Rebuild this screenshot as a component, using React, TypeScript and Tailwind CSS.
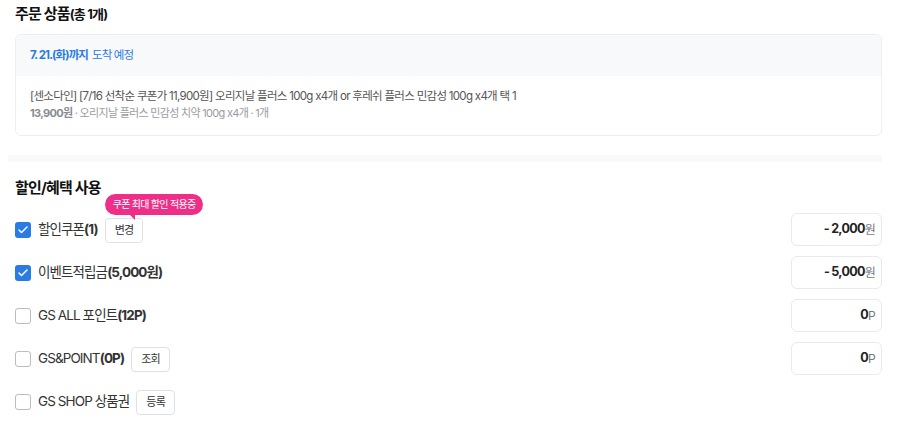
import { Check } from 'lucide-react'

const font = { fontFamily: 'Inter, "Noto Sans CJK KR", sans-serif' }

type Row = {
  label: string
  bold?: string
  checked: boolean
  button?: string
  tip?: string
  amount?: { value: string; unit: string }
}

const rows: Row[] = [
  { label: '할인쿠폰', bold: '(1)', checked: true, button: '변경', tip: '쿠폰 최대 할인 적용중', amount: { value: '- 2,000', unit: '원' } },
  { label: '이벤트적립금', bold: '(5,000원)', checked: true, amount: { value: '- 5,000', unit: '원' } },
  { label: 'GS ALL 포인트', bold: '(12P)', checked: false, amount: { value: '0', unit: 'P' } },
  { label: 'GS&POINT', bold: '(0P)', checked: false, button: '조회', amount: { value: '0', unit: 'P' } },
  { label: 'GS SHOP 상품권', checked: false, button: '등록' },
]

function Checkbox({ checked }: { checked: boolean }) {
  if (checked) {
    return (
      <span className="flex h-4 w-4 shrink-0 items-center justify-center rounded-[3px] bg-[#2b7be4]">
        <Check size={12} strokeWidth={3} className="text-white" />
      </span>
    )
  }
  return <span className="h-4 w-4 shrink-0 rounded-[3px] border border-[#b9bcc3] bg-white" />
}

function BenefitRow({ row }: { row: Row }) {
  return (
    <div className="flex h-[33px] items-center justify-between">
      <div className="flex items-center">
        <Checkbox checked={row.checked} />
        <span className="ml-[7px] text-[13.5px] tracking-[-0.9px] text-[#333]">
          {row.label}
          {row.bold && <b className="font-bold">{row.bold}</b>}
        </span>
        {row.button && (
          <div className="relative ml-[7px]">
            {row.tip && (
              <div className="absolute bottom-[28px] left-0 whitespace-nowrap rounded-full bg-[#ee2f88] px-[8px] py-[3px] text-[10px] leading-[15px] tracking-[-0.7px] text-white">
                {row.tip}
                <span className="absolute -bottom-[5px] left-[24px] h-0 w-0 border-l-[6px] border-t-[6px] border-l-transparent border-t-[#ee2f88]" />
              </div>
            )}
            <button className="h-[25px] rounded-[4px] border border-[#dfe1e5] bg-white px-[9px] text-[11px] tracking-[-0.7px] text-[#333]">
              {row.button}
            </button>
          </div>
        )}
      </div>
      {row.amount && (
        <div className="flex h-[33px] w-[91px] items-center justify-end rounded-[6px] border border-[#e8eaee] pr-[6px] tracking-[-0.7px]">
          <span className="text-[12.5px] font-bold text-[#222]">{row.amount.value}</span>
          <span className="text-[12px] text-[#777]">{row.amount.unit}</span>
        </div>
      )}
    </div>
  )
}

export default function App() {
  return (
    <div className="min-h-[427px] w-[900px] bg-white pl-[15px] pr-[18px] pt-[4px]" style={font}>
      <h2 className="text-[15px] font-bold leading-[20px] tracking-[-0.8px] text-[#111]">
        주문 상품<span className="text-[13px]">(총 1개)</span>
      </h2>

      <div className="mt-[10px] overflow-hidden rounded-[6px] border border-[#eceef1]">
        <div className="flex h-[41px] items-center bg-[#f8f9fb] px-[14px] text-[11.5px] tracking-[-0.9px] text-[#2b7be4]">
          <b className="font-bold">7. 21.(화)까지</b>
          <span className="ml-[4px]">도착 예정</span>
        </div>
        <div className="px-[14px] pb-[14px] pt-[12px] tracking-[-0.7px]">
          <p className="text-[11.5px] leading-[17px] text-[#555]">
            [센소다인] [7/16 선착순 쿠폰가 11,900원] 오리지날 플러스 100g x4개 or 후레쉬 플러스 민감성 100g x4개 택 1
          </p>
          <p className="text-[11px] leading-[16px] text-[#9a9ca3]">
            <b className="font-bold text-[#8a8c92]">13,900원</b> · 오리지날 플러스 민감성 치약 100g x4개 · 1개
          </p>
        </div>
      </div>

      <div className="-ml-[7px] mt-[19px] h-[7px] bg-[#f8f9fb]" />

      <h2 className="mt-[16px] text-[15px] font-bold leading-[20px] tracking-[-0.8px] text-[#111]">할인/혜택 사용</h2>

      <div className="mt-[15px] flex flex-col gap-[10px]">
        {rows.map((row) => (
          <BenefitRow key={row.label} row={row} />
        ))}
      </div>
    </div>
  )
}
